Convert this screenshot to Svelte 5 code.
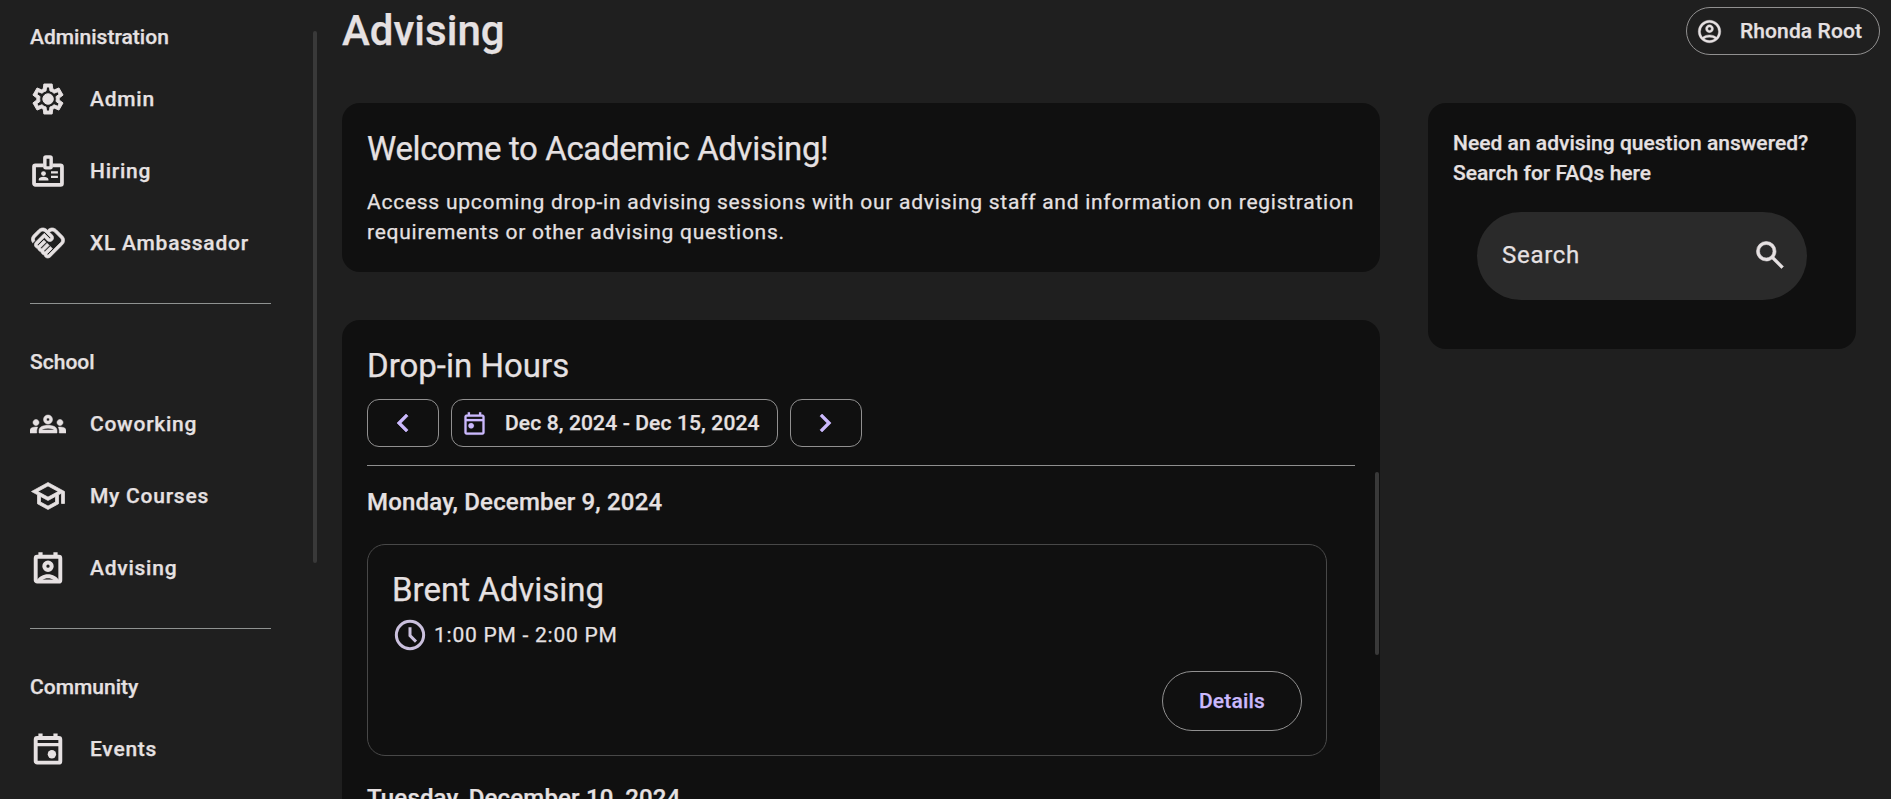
<script>
  const groups = [
    { title: 'Administration', items: [['Admin', 'gear'], ['Hiring', 'badge'], ['XL Ambassador', 'handshake']] },
    { title: 'School', items: [['Coworking', 'groups'], ['My Courses', 'school'], ['Advising', 'contact']] },
    { title: 'Community', items: [['Events', 'event']] }
  ];
  const days = [
    { date: 'Monday, December 9, 2024', name: 'Brent Advising', time: '1:00 PM - 2:00 PM' },
    { date: 'Tuesday, December 10, 2024' }
  ];
</script>

{#snippet icon(name)}
  {#if name === 'gear'}
    <svg class="icon" viewBox="0 -960 960 960"><path stroke="currentColor" stroke-width="26" d="m370-80-16-128q-13-5-24.500-12T307-235l-119 50L78-375l103-78q-1-7-1-13.500v-27q0-6.500 1-13.500L78-585l110-190 119 50q11-8 23-15t24-12l16-128h220l16 128q13 5 24.500 12t22.500 15l119-50 110 190-103 78q1 7 1 13.500v27q0 6.500-2 13.500l103 78-110 190-118-50q-11 8-23 15t-24 12L590-80H370Zm70-80h79l14-106q31-8 57.500-23.500T639-327l99 41 39-68-86-65q5-14 7-29.500t2-31.500q0-16-2-31.500t-7-29.500l86-65-39-68-99 42q-22-23-48.500-38.500T533-694l-13-106h-79l-14 106q-31 8-57.500 23.500T321-633l-99-41-39 68 86 64q-5 15-7 30t-2 32q0 16 2 31t7 30l-86 65 39 68 99-42q22 23 48.500 38.500T427-266l13 106Zm42-180q58 0 99-41t41-99q0-58-41-99t-99-41q-59 0-99.500 41T342-480q0 58 40.500 99t99.500 41Z" /></svg>
  {:else if name === 'badge'}
    <svg class="icon" viewBox="0 0 24 24">
      <path class="line" stroke-width="2.5" stroke-linejoin="round" d="M9 8.200H3.600a.9.900 0 0 0-.9.900v11.200a.9.900 0 0 0 .9.900h16.800a.9.900 0 0 0 .9-.9V9.100a.9.900 0 0 0-.9-.9H15" />
      <rect class="line" x="9.900" y="2.700" width="4.200" height="7.200" rx=".7" stroke-width="2.300" />
      <circle cx="9" cy="13.700" r="1.600" />
      <path d="M5.800 18.300v-.7c0-1.100 1.600-1.800 3.200-1.800s3.300.7 3.300 1.800v.7zM14 12.100h4.600v1.600H14zM14 15.100h4.600v1.600H14z" />
    </svg>
  {:else if name === 'handshake'}
    <svg class="icon" viewBox="0 0 24 24"><path stroke="currentColor" stroke-width=".5" d="M12.220 19.850c-.18.180-.5.210-.71 0-.18-.18-.21-.5 0-.71l3.390-3.390-1.410-1.410-3.390 3.390c-.19.200-.51.190-.71 0-.21-.21-.18-.53 0-.71l3.390-3.390-1.410-1.410-3.390 3.390c-.18.180-.5.210-.71 0-.19-.19-.19-.51 0-.71l3.390-3.390-1.420-1.410-3.390 3.390c-.18.180-.5.210-.71 0-.19-.2-.19-.51 0-.71L9.520 8.400l1.870 1.860c.95.950 2.590.940 3.540 0 .98-.98.980-2.560 0-3.540l-1.860-1.860.28-.28c.78-.78 2.050-.78 2.830 0l4.240 4.240c.78.780.780 2.050 0 2.830l-8.200 8.200zm9.610-6.780c1.560-1.560 1.560-4.090 0-5.660l-4.240-4.240c-1.560-1.560-4.090-1.560-5.660 0l-.28.280-.28-.28c-1.560-1.560-4.090-1.560-5.660 0L2.170 6.710c-1.420 1.420-1.550 3.630-.4 5.190l1.450-1.450c-.39-.75-.26-1.700.37-2.330l3.540-3.540c.78-.78 2.050-.78 2.830 0l3.560 3.560c.18.180.21.500 0 .71-.21.210-.53.180-.71 0L9.520 5.570l-5.800 5.790c-.98.970-.98 2.560 0 3.540.39.390.89.630 1.420.7.070.520.300 1.020.7 1.420.4.400.9.630 1.420.7.070.520.300 1.020.7 1.420.4.400.9.630 1.420.7.070.540.310 1.030.7 1.420.47.470 1.100.730 1.770.730.670 0 1.300-.26 1.770-.73l8.210-8.190z" /></svg>
  {:else if name === 'groups'}
    <svg class="icon" viewBox="0 0 24 24"><path stroke="currentColor" stroke-width=".35" d="M4 13c1.100 0 2-.9 2-2s-.9-2-2-2-2 .9-2 2 .9 2 2 2zm1.130 1.100c-.37-.06-.74-.1-1.130-.1-.99 0-1.930.210-2.780.580C.48 14.900 0 15.620 0 16.430V18h4.500v-1.610c0-.83.230-1.610.630-2.290zM20 13c1.100 0 2-.9 2-2s-.9-2-2-2-2 .9-2 2 .9 2 2 2zm4 3.430c0-.81-.48-1.530-1.220-1.850-.85-.37-1.790-.58-2.780-.58-.39 0-.76.040-1.130.1.400.680.630 1.460.630 2.290V18H24v-1.570zm-7.760-2.780c-1.170-.52-2.610-.9-4.240-.9-1.630 0-3.070.390-4.240.9C6.680 14.130 6 15.210 6 16.390V18h12v-1.610c0-1.180-.68-2.260-1.760-2.740zM8.070 16c.09-.23.130-.39.910-.69.970-.38 1.990-.56 3.020-.56s2.050.180 3.020.560c.77.300.810.460.910.690H8.070zM12 8c.55 0 1 .45 1 1s-.45 1-1 1-1-.45-1-1 .45-1 1-1m0-2c-1.660 0-3 1.340-3 3s1.340 3 3 3 3-1.340 3-3-1.340-3-3-3z" /></svg>
  {:else if name === 'school'}
    <svg class="icon" viewBox="0 0 24 24"><path stroke="currentColor" stroke-width=".5" d="M12 3 1 9l4 2.180v6L12 21l7-3.820v-6l2-1.090V17h2V9L12 3zm6.820 6L12 12.720 5.180 9 12 5.280 18.820 9zM17 15.990l-5 2.730-5-2.730v-3.720L12 15l5-2.730v3.720z" /></svg>
  {:else if name === 'contact'}
    <svg class="icon" viewBox="0 0 24 24">
      <rect class="line" x="3.800" y="4.500" width="16.400" height="16.600" rx="1" stroke-width="2.600" />
      <path d="M5.600 1.500h2.800v3H5.600zM15.600 1.500h2.800v3h-2.800z" />
      <circle class="line" cx="12" cy="10.800" r="2.450" stroke-width="2.700" />
      <path d="M4.600 20.200c1.400-2.500 4.200-4.100 7.400-4.100s6 1.600 7.400 4.100v.7H4.600zM8.300 19.900h7.400c-1-.6-2.300-1-3.700-1s-2.700.4-3.700 1z" fill-rule="evenodd" />
    </svg>
  {:else}
    <svg class="icon" viewBox="0 0 24 24">
      <rect class="line" x="3.800" y="4.700" width="16.400" height="16.400" rx="1" stroke-width="2.600" />
      <path d="M5.600 1.600h2.800v3H5.600zM15.600 1.600h2.800v3h-2.800zM4 8h16v2.200H4z" />
      <circle cx="14.600" cy="15.500" r="2.800" />
    </svg>
  {/if}
{/snippet}

<div class="app">
  <nav>
    {#each groups as group}
      <section>
        <h3>{group.title}</h3>
        {#each group.items as [label, name]}
          <a href="#top">{@render icon(name)}<span>{label}</span></a>
        {/each}
      </section>
    {/each}
    <div class="thumb nav-thumb"></div>
  </nav>
  <main>
    <header>
      <h1>Advising</h1>
      <button class="user">
        <svg viewBox="0 -960 960 960"><path stroke="currentColor" stroke-width="14" d="M234-276q51-39 114-61.500T480-360q69 0 132 22.500T726-276q35-41 54.500-93T800-480q0-133-93.500-226.500T480-800q-133 0-226.500 93.500T160-480q0 59 19.500 111t54.500 93Zm246-164q-59 0-99.500-40.500T340-580q0-59 40.500-99.500T480-720q59 0 99.500 40.500T620-580q0 59-40.500 99.500T480-440Zm0 360q-83 0-156-31.500T197-197q-54-54-85.500-127T80-480q0-83 31.500-156T197-763q54-54 127-85.500T480-880q83 0 156 31.500T763-763q54 54 85.500 127T880-480q0 83-31.500 156T763-197q-54 54-127 85.500T480-80Zm0-80q53 0 100-15.500t86-44.500q-39-29-86-44.500T480-280q-53 0-100 15.500T294-220q39 29 86 44.500T480-160Zm0-360q26 0 43-17t17-43q0-26-17-43t-43-17q-26 0-43 17t-17 43q0 26 17 43t43 17Z" /></svg>
        <span>Rhonda Root</span>
      </button>
    </header>
    <div class="columns">
      <div class="primary">
        <section class="card welcome">
          <h2>Welcome to Academic Advising!</h2>
          <p>Access upcoming drop-in advising sessions with our advising staff and information on registration requirements or other advising questions.</p>
        </section>
        <section class="card hours">
          <h2>Drop-in Hours</h2>
          <div class="range">
            <button class="step" aria-label="Previous week"><svg class="icon" viewBox="0 -960 960 960"><path stroke="currentColor" stroke-width="16" d="M560-240 320-480l240-240 56 56-184 184 184 184-56 56Z" /></svg></button>
            <button class="dates">
              <svg viewBox="0 -960 960 960"><path stroke="currentColor" stroke-width="6" d="M360-300q-42 0-71-29t-29-71q0-42 29-71t71-29q42 0 71 29t29 71q0 42-29 71t-71 29ZM200-80q-33 0-56.500-23.500T120-160v-560q0-33 23.500-56.500T200-800h40v-80h80v80h320v-80h80v80h40q33 0 56.500 23.500T840-720v560q0 33-23.500 56.500T760-80H200Zm0-80h560v-400H200v400Zm0-480h560v-80H200v80Z" /></svg>
              <span>Dec 8, 2024 - Dec 15, 2024</span>
            </button>
            <button class="step" aria-label="Next week"><svg class="icon" viewBox="0 -960 960 960"><path stroke="currentColor" stroke-width="16" d="M504-480 320-664l56-56 240 240-240 240-56-56 184-184Z" /></svg></button>
          </div>
          <div class="list">
            {#each days as day}
              <h4>{day.date}</h4>
              {#if day.name}
                <article>
                  <h2>{day.name}</h2>
                  <div class="time">
                    <svg class="icon" viewBox="0 0 24 24"><circle class="line" cx="12" cy="12" r="9.100" stroke-width="2" /><path class="line" stroke-width="2" d="M12 6.800v5.600l4 4" /></svg>
                    <span>{day.time}</span>
                  </div>
                  <button class="details">Details</button>
                </article>
              {/if}
            {/each}
            <div class="thumb list-thumb"></div>
          </div>
        </section>
      </div>
      <aside class="card">
        <h3>Need an advising question answered? Search for FAQs here</h3>
        <div class="search">
          <span>Search</span>
          <svg class="icon" viewBox="0 -960 960 960"><path stroke="currentColor" stroke-width="16" d="M784-120 532-372q-30 24-69 38t-83 14q-109 0-184.500-75.500T120-580q0-109 75.500-184.500T380-840q109 0 184.500 75.500T640-580q0 44-14 83t-38 69l252 252-56 56ZM380-400q75 0 127.500-52.500T560-580q0-75-52.500-127.500T380-760q-75 0-127.500 52.500T200-580q0 75 52.500 127.500T380-400Z" /></svg>
        </div>
      </aside>
    </div>
  </main>
</div>

<style>
  :global(body) { margin: 0; background: #1f1f1f; overflow: hidden; }
  * { box-sizing: border-box; }
  .app { display: flex; width: 100vw; height: 100vh; overflow: hidden; background: #1f1f1f; color: #e6e1e2; font-family: Roboto, sans-serif; -webkit-text-stroke: 0.25px currentColor; }
  h1, h2, h3, h4, p { margin: 0; }
  svg { display: block; flex: none; fill: currentColor; }
  .icon { width: 36px; height: 36px; }
  .line { fill: none; stroke: currentColor; }
  button { font: inherit; color: inherit; background: none; border: 1px solid #919090; padding: 0; cursor: pointer; display: flex; align-items: center; }

  nav { position: relative; width: 342px; flex: none; padding: 22px 71px 0 30px; overflow: hidden; }
  nav section { height: 281px; }
  nav section + section { border-top: 1px solid #8f9291; height: 325px; padding-top: 43px; }
  h3 { font-size: 21px; line-height: 30px; font-weight: 500; letter-spacing: 0.02px; }
  nav h3 { margin-bottom: 11px; }
  nav a { display: flex; align-items: center; gap: 24px; height: 72px; color: inherit; text-decoration: none; font-size: 21px; font-weight: 500; letter-spacing: 0.75px; white-space: nowrap; }
  .thumb { position: absolute; width: 4px; border-radius: 2px; background: #393939; }
  .nav-thumb { left: 313px; top: 31px; height: 532px; }

  main { flex: 1; min-width: 0; }
  header { display: flex; justify-content: space-between; height: 103px; padding: 7px 11px 0 0; }
  h1 { font-size: 42px; line-height: 48px; font-weight: 500; }
  .user { width: 194px; height: 48px; border-radius: 24px; padding-left: 9px; gap: 17px; font-size: 21px; font-weight: 500; letter-spacing: 0.1px; }
  .user svg, .dates svg { width: 27px; height: 27px; }
  .columns { display: flex; gap: 48px; align-items: flex-start; }
  .primary { width: 1038px; display: flex; flex-direction: column; gap: 48px; }
  .card { background: #101010; border-radius: 18px; padding: 25px 24px 24px 25px; }
  h2 { font-size: 33px; line-height: 42px; font-weight: 400; white-space: nowrap; }
  .welcome { height: 169px; }
  .welcome h2 { letter-spacing: -0.38px; }
  .welcome p { margin-top: 17px; font-size: 21px; line-height: 30px; letter-spacing: 0.74px; }
  .hours { height: 700px; }
  .range { display: flex; gap: 12px; margin-top: 12px; padding-bottom: 18px; border-bottom: 1px solid #8f8f8f; width: 988px; }
  .range button { height: 48px; border-radius: 12px; color: #cbb9fd; }
  .step { width: 72px; justify-content: center; }
  .dates { width: 327px; padding-left: 9px; gap: 17px; font-size: 21px; font-weight: 500; letter-spacing: 0.14px; }
  .dates span { color: #e6e1e2; }
  .list { position: relative; width: 1014px; padding-top: 21px; }
  h4 { font-size: 24px; line-height: 30px; font-weight: 500; letter-spacing: 0.18px; }
  article { width: 960px; height: 212px; margin: 27px 0; border: 1px solid #484848; border-radius: 18px; padding: 24px; display: flex; flex-direction: column; }
  .time { display: flex; align-items: center; gap: 6px; color: #cac0dd; margin-top: 6px; }
  .time span { color: #e6e1e2; font-size: 21px; letter-spacing: 0.75px; }
  .details { align-self: flex-end; width: 140px; height: 60px; border-radius: 30px; justify-content: center; color: #cbb9fd; font-size: 21px; font-weight: 500; letter-spacing: 0.2px; margin-top: auto; }
  .list-thumb { left: 1008px; top: 6px; height: 183px; }
  aside.card { width: 428px; height: 246px; padding: 25px 20px 0 25px; }
  .search { display: flex; align-items: center; justify-content: space-between; width: 330px; height: 88px; margin: 24px 0 0 24px; padding: 0 19px 2px 25px; border-radius: 44px; background: #2a2a2a; font-size: 24px; letter-spacing: 0.7px; }
</style>
